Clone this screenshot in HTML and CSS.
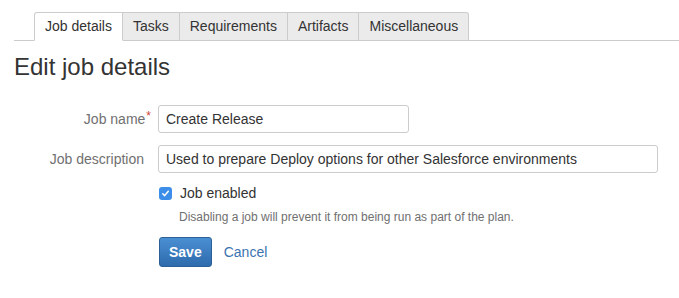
FILE: index.html
```html
<!DOCTYPE html>
<html lang="en">
<head>
    <meta charset="UTF-8">
    <title>Edit job details</title>
    <link rel="stylesheet" href="styles.css">
</head>
<body>
    <!-- Tabs -->
    <nav class="tabs">
        <ul>
            <li class="active"><a href="#">Job details</a></li>
            <li><a href="#">Tasks</a></li>
            <li><a href="#">Requirements</a></li>
            <li><a href="#">Artifacts</a></li>
            <li><a href="#">Miscellaneous</a></li>
        </ul>
    </nav>

    <div class="content">
        <h1>Edit job details</h1>

        <form class="job-form">
            <div class="field">
                <label for="jobName">Job name<span class="req">*</span></label>
                <input type="text" id="jobName" class="short" value="Create Release">
            </div>
            <div class="field">
                <label for="jobDesc">Job description</label>
                <input type="text" id="jobDesc" class="long" value="Used to prepare Deploy options for other Salesforce environments">
            </div>

            <div class="field check-row">
                <span></span>
                <div>
                    <label class="check">
                        <span class="box">
                            <svg width="9" height="9" viewBox="0 0 9 9"><path d="M1.8 4.8 L3.7 6.6 L7.3 2.3" fill="none" stroke="#fff" stroke-width="1.5" stroke-linecap="round" stroke-linejoin="round"/></svg>
                        </span>
                        Job enabled
                    </label>
                    <p class="hint">Disabling a job will prevent it from being run as part of the plan.</p>
                </div>
            </div>

            <div class="field buttons">
                <span></span>
                <div>
                    <button type="button" class="save">Save</button>
                    <a href="#" class="cancel">Cancel</a>
                </div>
            </div>
        </form>
    </div>
</body>
</html>
```

FILE: styles.css
```css
body {
    margin: 0;
    font-family: "Liberation Sans", Arial, sans-serif;
    font-size: 14px;
    color: #333;
    background: #fff;
}

/* Tabs */
.tabs {
    margin: 12px 0 0 14px;
    border-bottom: 1px solid #ccc;
}
.tabs ul {
    list-style: none;
    margin: 0 0 -1px 20px;
    padding: 0;
    display: flex;
}
.tabs li {
    border: 1px solid #ccc;
    border-left: none;
    background: #ebebeb;
}
.tabs li:first-child {
    border-left: 1px solid #ccc;
    border-top-left-radius: 3px;
}
.tabs li:last-child {
    border-top-right-radius: 3px;
}
.tabs li.active {
    background: #fff;
    border-bottom-color: #fff;
}
.tabs a {
    display: block;
    padding: 0 10px;
    line-height: 27px;
    color: #333;
    text-decoration: none;
}

/* Content */
.content {
    padding: 0 14px;
}
h1 {
    font-size: 24px;
    font-weight: normal;
    line-height: 28px;
    margin: 12px 0 24px;
    color: #333;
}
.field {
    display: grid;
    grid-template-columns: 130px 1fr;
    column-gap: 14px;
    align-items: center;
    margin-bottom: 12px;
}
.field label {
    text-align: right;
    color: #707070;
}
.req {
    color: #d04437;
    vertical-align: top;
    font-size: 12px;
    line-height: 10px;
    margin-left: 1px;
    margin-right: -7px;
}
input[type="text"] {
    height: 28px;
    box-sizing: border-box;
    border: 1px solid #ccc;
    border-radius: 3px;
    padding: 0 7px;
    font-family: inherit;
    font-size: 14px;
    color: #333;
}
input.short {
    width: 251px;
}
input.long {
    width: 500px;
}

/* Checkbox */
.check-row {
    margin-top: 11px;
    margin-bottom: 0;
}
.field label.check {
    display: flex;
    align-items: center;
    gap: 8px;
    text-align: left;
    color: #333;
    margin-left: 1px;
}
.box {
    width: 13px;
    height: 13px;
    border-radius: 3px;
    background: #3d8ee8;
    display: flex;
    align-items: center;
    justify-content: center;
}
.hint {
    margin: 9px 0 0 21px;
    font-size: 12px;
    color: #707070;
}

/* Buttons */
.buttons {
    margin-top: 13px;
}
.buttons div {
    display: flex;
    align-items: center;
    gap: 12px;
}
.save {
    background: linear-gradient(#4a8fd3, #2d6bac);
    border: 1px solid #2b5f96;
    border-radius: 3px;
    color: #fff;
    font-family: inherit;
    font-weight: bold;
    font-size: 14px;
    height: 30px;
    padding: 0 9px;
    margin-left: 1px;
    cursor: pointer;
}
.cancel {
    color: #3b73af;
    text-decoration: none;
}
```
